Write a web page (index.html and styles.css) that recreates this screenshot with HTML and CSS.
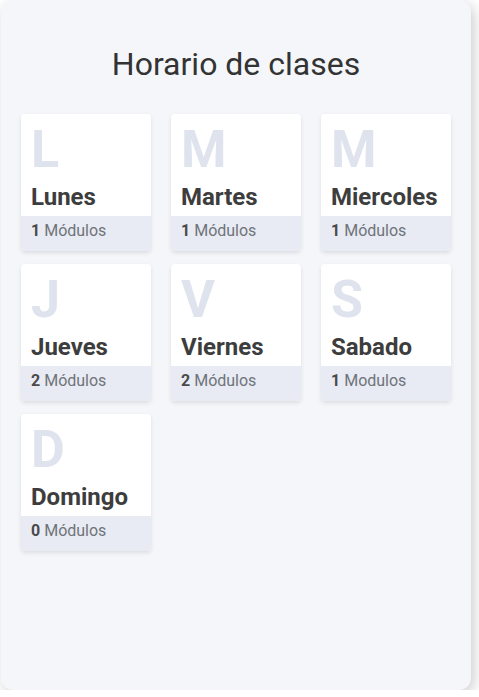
FILE: index.html
```html
<!DOCTYPE html>
<html lang="es">
<head>
<meta charset="utf-8">
<title>Horario de clases</title>
<link rel="stylesheet" href="styles.css">
</head>
<body>
<div class="panel">
  <h1 class="title">Horario de clases</h1>
  <div class="grid">
    <div class="card"><div class="card-top"><div class="letter">L</div><div class="name">Lunes</div></div><div class="foot"><b>1</b> Módulos</div></div>
    <div class="card"><div class="card-top"><div class="letter">M</div><div class="name">Martes</div></div><div class="foot"><b>1</b> Módulos</div></div>
    <div class="card"><div class="card-top"><div class="letter">M</div><div class="name">Miercoles</div></div><div class="foot"><b>1</b> Módulos</div></div>
    <div class="card"><div class="card-top"><div class="letter">J</div><div class="name">Jueves</div></div><div class="foot"><b>2</b> Módulos</div></div>
    <div class="card"><div class="card-top"><div class="letter">V</div><div class="name">Viernes</div></div><div class="foot"><b>2</b> Módulos</div></div>
    <div class="card"><div class="card-top"><div class="letter">S</div><div class="name">Sabado</div></div><div class="foot"><b>1</b> Modulos</div></div>
    <div class="card"><div class="card-top"><div class="letter">D</div><div class="name">Domingo</div></div><div class="foot"><b>0</b> Módulos</div></div>
  </div>
</div>
</body>
</html>
```
FILE: styles.css
```css
html, body {
  margin: 0;
  padding: 0;
  background: #ffffff;
  font-family: Roboto, "Liberation Sans", sans-serif;
  overflow: hidden;
}
.panel {
  box-sizing: border-box;
  margin-left: 1px;
  width: 470px;
  height: 690px;
  background: #f4f6fa;
  border-radius: 12px;
  box-shadow: 3px 4px 14px rgba(0, 0, 0, 0.2);
  padding: 44px 20px 0;
}
.title {
  margin: 0 0 30px;
  font-size: 32px;
  line-height: 40px;
  font-weight: 400;
  color: #333333;
  text-align: center;
}
.grid {
  display: grid;
  grid-template-columns: repeat(3, 130px);
  column-gap: 20px;
  row-gap: 13px;
}
.card {
  background: #ffffff;
  border-radius: 4px;
  overflow: hidden;
  box-shadow: 0 2px 4px rgba(0, 0, 0, 0.1);
}
.card-top {
  padding: 9px 10px 5px;
}
.letter {
  font-size: 52px;
  line-height: 54px;
  color: #dfe3ee;
  font-weight: 700;
}
.name {
  margin-top: 6px;
  font-size: 24px;
  line-height: 28px;
  font-weight: 700;
  color: #3d3d3d;
}
.foot {
  background: #e8ebf3;
  padding: 5px 10px 10px;
  font-size: 16px;
  line-height: 20px;
  color: #6f7479;
}
.foot b {
  color: #4a4a4a;
  font-weight: 700;
}
```
